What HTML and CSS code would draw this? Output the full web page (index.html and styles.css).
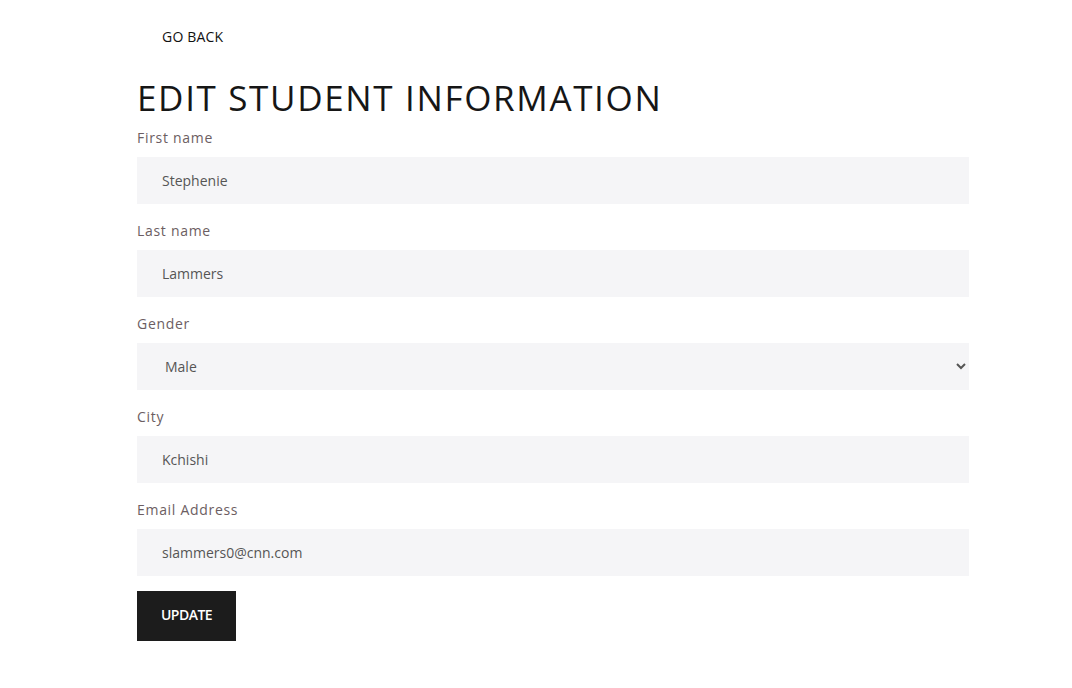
FILE: index.html
```html
<!DOCTYPE html>
<html lang="en">
<head>
<meta charset="utf-8">
<title>Edit Student Information</title>
<link rel="stylesheet" href="styles.css">
</head>
<body>
<main class="page">
  <a class="back" href="#">GO BACK</a>
  <h1 class="title">EDIT STUDENT INFORMATION</h1>
  <form class="form">
    <label class="field">
      <span class="label">First name</span>
      <input class="control" type="text" value="Stephenie">
    </label>
    <label class="field">
      <span class="label">Last name</span>
      <input class="control" type="text" value="Lammers">
    </label>
    <label class="field">
      <span class="label">Gender</span>
      <select class="control select">
        <option selected>Male</option>
        <option>Female</option>
      </select>
    </label>
    <label class="field">
      <span class="label">City</span>
      <input class="control" type="text" value="Kchishi">
    </label>
    <label class="field">
      <span class="label">Email Address</span>
      <input class="control" type="email" value="slammers0@cnn.com">
    </label>
    <div class="actions">
      <button class="update" type="button">UPDATE</button>
    </div>
  </form>
</main>
</body>
</html>
```
FILE: styles.css
```css
* { box-sizing: border-box; }
html, body { margin: 0; background: #fff; }
body { font-family: "Open Sans", "Noto Sans", sans-serif; color: #1a1a1a; }
.page {
  width: 832px;
  margin-left: 137px;
  padding-top: 12px;
  display: flex;
  flex-direction: column;
  align-items: flex-start;
}
.back {
  display: block;
  padding: 0 25px;
  height: 50px;
  line-height: 50px;
  font-size: 14px;
  color: #111;
  text-decoration: none;
  letter-spacing: 0.2px;
}
.title {
  margin: 12px 0 0 0;
  font-size: 35px;
  font-weight: 400;
  line-height: 48px;
  letter-spacing: 1.65px;
  color: #161616;
}
.form {
  width: 100%;
  margin-top: 5px;
  display: flex;
  flex-direction: column;
}
.field {
  display: flex;
  flex-direction: column;
}
.label {
  font-size: 14px;
  line-height: 20px;
  letter-spacing: 0.7px;
  color: #6c5e62;
  margin-top: 1px;
  margin-bottom: 9px;
}
.control {
  width: 100%;
  height: 47px;
  border: none;
  outline: none;
  background: #f5f5f7;
  padding: 0 25px 1px;
  font-family: inherit;
  font-size: 14px;
  color: #555;
  margin-bottom: 16px;
}
.select {
  padding-left: 24px;
  padding-right: 8px;
}
.actions {
  margin-top: -1px;
}
.update {
  width: 99px;
  height: 50px;
  border: none;
  background: #1c1c1c;
  color: #fff;
  font-family: inherit;
  font-size: 14px;
  font-weight: 600;
  letter-spacing: -0.5px;
  padding: 0 0 3px;
}
```
